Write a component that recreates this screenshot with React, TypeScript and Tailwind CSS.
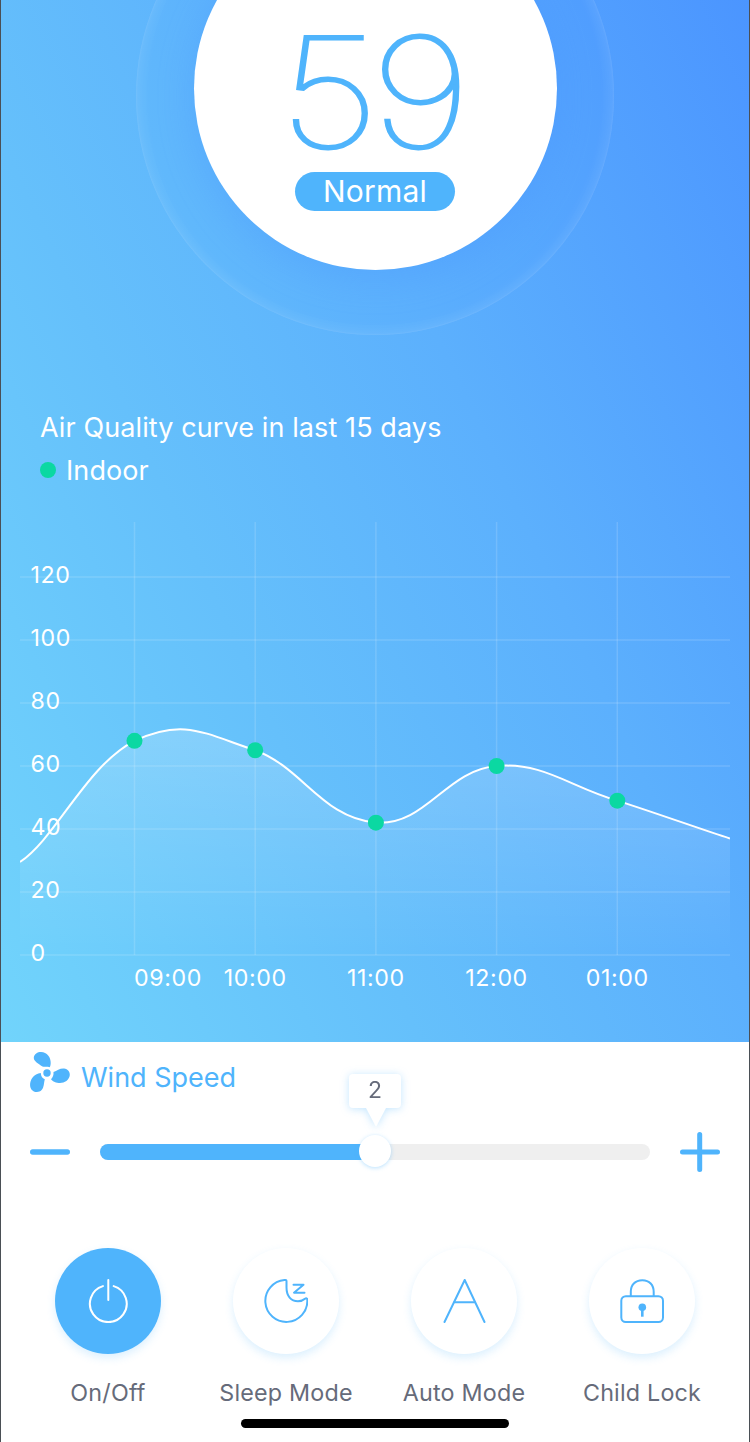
import { useState } from "react";

type Point = { label: string; value: number };

const points: Point[] = [
  { label: "09:00", value: 68 },
  { label: "10:00", value: 65 },
  { label: "11:00", value: 42 },
  { label: "12:00", value: 60 },
  { label: "01:00", value: 49 },
];

const ticks = [0, 20, 40, 60, 80, 100, 120];

const curve =
  "M0 342 C36 318 66 246 114.5 220.8 C164 198 183 213 235.2 230.2 C283 248 302 298 356 302.7 C406 306 426 250 476.5 246 C524 242 550 267 597.2 280.6 C645 296 680 309 710 318.5";

function getX(i: number) {
  return 114.5 + 120.7 * i;
}

function getY(value: number) {
  return 435 - value * 3.15;
}

function Chart() {
  return (
    <svg className="mx-[19px] mt-[31px] block" width="710" height="480" viewBox="0 0 710 480">
      <defs>
        <linearGradient id="area" x1="0" y1="0" x2="0" y2="1">
          <stop offset="0" stopColor="#fff" stopOpacity="0.2" />
          <stop offset="1" stopColor="#fff" stopOpacity="0" />
        </linearGradient>
      </defs>
      <g stroke="#fff" strokeOpacity="0.14" strokeWidth="1.5">
        {ticks.map((t) => (
          <line key={t} x1="0" x2="710" y1={getY(t)} y2={getY(t)} />
        ))}
        {points.map((p, i) => (
          <line key={p.label} x1={getX(i)} x2={getX(i)} y1="2" y2="435" />
        ))}
      </g>
      <path d={`${curve} V435 H0 Z`} fill="url(#area)" />
      <g fill="#fff" fontSize="23.2" letterSpacing="0.6">
        {ticks.map((t) => (
          <text key={t} x="10.5" y={getY(t) + 6}>
            {t}
          </text>
        ))}
        {points.map((p, i) => (
          <text
            key={p.label}
            x={i === 0 ? 114 : getX(i)}
            y="466"
            textAnchor={i === 0 ? "start" : "middle"}
          >
            {p.label}
          </text>
        ))}
      </g>
      <path d={curve} fill="none" stroke="#fff" strokeWidth="2" />
      {points.map((p, i) => (
        <circle key={p.label} cx={getX(i)} cy={getY(p.value)} r="8" fill="#0bd8a2" />
      ))}
    </svg>
  );
}

function FanIcon() {
  return (
    <svg width="40" height="40" viewBox="0 0 40 40" fill="#4fb4fc">
      <circle cx="17" cy="21" r="3.7" />
      <path d="M12.5 14.5C8 11.5 3.5 9 3.8 5.5C4.2 2 7.5 0 11 0C17 0 21 5.5 20.7 11C20.6 13 20.3 15 19.5 15.2C17 14.2 14.5 15.2 12.5 14.5Z" />
      <path d="M23.5 20C27 18.5 30 16.2 34 16.5C38 16.9 40 19.8 39.8 23C39.4 28 34.5 31 30 31C26.5 31 22.5 29.7 21 27.3C22.8 25.5 23.8 23 23.5 20Z" />
      <path d="M10.8 21C11 24.2 12.2 26.2 14.8 27.2C13.8 31 14.2 35 11.6 38C8.8 41 3.8 40.4 1.4 37.4C-.8 34.4 -.1 29.4 2.2 26C4.2 23.2 7.6 21.2 10.8 21Z" />
    </svg>
  );
}

function PowerIcon() {
  return (
    <svg width="44" height="44" viewBox="0 0 44 44" fill="none" stroke="#fff" strokeWidth="2" strokeLinecap="round">
      <path d="M22.3 1V21" />
      <path d="M16.9 7.1A18.4 18.4 0 1 0 27.7 7.1" />
    </svg>
  );
}

function SleepIcon() {
  return (
    <svg width="44" height="44" viewBox="0 0 44 44" fill="none" stroke="#4fb4fc" strokeWidth="2" strokeLinejoin="round" strokeLinecap="round">
      <path d="M22.5 2.2V8.5C22.5 17 27 22.2 34 22.2C37.5 22.2 39.5 21.2 41 19.8C42.2 18.8 43.3 19.3 43.3 20.8A21 21 0 1 1 20.5 1C22 .9 22.5 1.2 22.5 2.2Z" />
      <path d="M29.5 5.7H39.5L30 13.7H40.5" />
    </svg>
  );
}

function AutoIcon() {
  return (
    <svg width="44" height="44" viewBox="0 0 44 44" fill="none" stroke="#4fb4fc" strokeWidth="2" strokeLinejoin="round" strokeLinecap="round">
      <path d="M2.5 43L22.7 1L42.5 43" />
      <path d="M12.5 23.3H32.5" />
    </svg>
  );
}

function LockIcon() {
  return (
    <svg width="44" height="44" viewBox="0 0 44 44" fill="none" stroke="#4fb4fc" strokeWidth="2">
      <rect x="1.3" y="17.2" width="41.7" height="25.8" rx="4.5" />
      <path d="M10.8 17V13C10.8 6 15 1.3 22.3 1.3C29.5 1.3 33.7 6 33.7 13V17" />
      <circle cx="22.3" cy="28.2" r="3.8" fill="#4fb4fc" stroke="none" />
      <path d="M22.3 29V37.7" strokeWidth="2.6" />
    </svg>
  );
}

const modes = [
  { name: "On/Off", icon: <PowerIcon /> },
  { name: "Sleep Mode", icon: <SleepIcon /> },
  { name: "Auto Mode", icon: <AutoIcon /> },
  { name: "Child Lock", icon: <LockIcon /> },
];

export default function App() {
  const [speed, setSpeed] = useState(2);
  const [active, setActive] = useState("On/Off");

  return (
    <div className="h-[1442px] w-[750px] overflow-hidden border-x border-[#4a4f55] bg-white font-['Inter',sans-serif]">
      <div className="flex h-[1042px] flex-col overflow-hidden bg-[linear-gradient(65deg,#71d4fb_0%,#65c0fb_34%,#5cb0fd_62%,#4b95ff_100%)]">
        <div className="mx-auto -mt-[143px] h-[478px] w-[478px] shrink-0 rounded-full shadow-[inset_0_0_16px_rgba(255,255,255,0.14),inset_0_0_2px_rgba(255,255,255,0.15)]">
          <div className="mx-auto mt-[50px] flex h-[363px] w-[363px] flex-col items-center rounded-full bg-white shadow-[0_8px_44px_rgba(72,146,255,0.35)]">
            <div className="mt-[106px] h-[159px] -translate-x-[4.5px] scale-x-[1.16] text-[154px] leading-[158px] font-thin tracking-[-8px] text-[#4fb4fc] [-webkit-text-stroke:2px_#4fb4fc]">
              59
            </div>
            <div className="h-[39px] w-[160px] rounded-full bg-[#4fb4fc] text-center text-[30px] leading-[39px] tracking-[0.2px] text-white">
              Normal
            </div>
          </div>
        </div>

        <div className="mt-[75px] px-[39px] text-[27px] leading-[36px] tracking-[0.1px] text-white">
          <div>Air Quality curve in last 15 days</div>
          <div className="mt-[7px] flex items-center">
            <span className="mr-[10px] -mt-[2px] h-4 w-4 rounded-full bg-[#0bd8a2]" />
            Indoor
          </div>
        </div>

        <Chart />
      </div>

      <div className="flex h-[70px] items-center pl-[29px] text-[27px] text-[#4fb4fc]">
        <div className="-mt-[10px] mr-[11px]">
          <FanIcon />
        </div>
        <span className="mt-[3px]">Wind Speed</span>
      </div>

      <div className="flex h-20 items-center px-[29px]">
        <button onClick={() => setSpeed(Math.max(0, speed - 1))}>
          <svg width="40" height="40" viewBox="0 0 40 40" stroke="#4fb4fc" strokeWidth="5.4" strokeLinecap="round">
            <path d="M2.7 20H37.3" />
          </svg>
        </button>
        <div className="relative mx-[30px] h-4 flex-1 rounded-full bg-[#efefef]">
          <div
            className="h-4 rounded-full bg-[#4fb4fc]"
            style={{ width: `${speed * 25}%` }}
          />
          <div
            className="absolute -top-[9px] h-8 w-8 -translate-x-1/2 rounded-full bg-white shadow-[0_1px_4px_rgba(79,180,252,0.4)]"
            style={{ left: `${speed * 25}%` }}
          />
          <div
            className="absolute -top-[70px] -translate-x-1/2 drop-shadow-[0_1px_4px_rgba(79,180,252,0.35)]"
            style={{ left: `${speed * 25}%` }}
          >
            <div className="h-[34px] w-[52px] rounded bg-white text-center text-[23px] leading-[33px] text-[#666b7a]">
              {speed}
            </div>
            <svg className="mx-auto block translate-x-px" width="20" height="19" viewBox="0 0 20 19">
              <path d="M0 0H20L10 19Z" fill="#fff" />
            </svg>
          </div>
        </div>
        <button onClick={() => setSpeed(Math.min(4, speed + 1))}>
          <svg width="40" height="40" viewBox="0 0 40 40" stroke="#4fb4fc" strokeWidth="5" strokeLinecap="round">
            <path d="M2.5 20H37.5M19.7 2.5V37.5" />
          </svg>
        </button>
      </div>

      <div className="mt-[55.5px] flex px-[18px]">
        {modes.map((m) => (
          <div key={m.name} className="flex w-[178px] flex-col items-center">
            <button
              onClick={() => setActive(m.name)}
              className={`flex h-[106px] w-[106px] items-center justify-center rounded-full shadow-[0_4px_8px_rgba(79,180,252,0.2)] ${
                active === m.name ? "bg-[#4fb4fc]" : "bg-white"
              }`}
            >
              {m.icon}
            </button>
            <div className="mt-[21.5px] text-[23.3px] leading-9 tracking-[0.2px] text-[#666b7a]">{m.name}</div>
          </div>
        ))}
      </div>
      <div className="mx-auto mt-2 h-[9px] w-[268px] rounded-full bg-black" />
    </div>
  );
}
